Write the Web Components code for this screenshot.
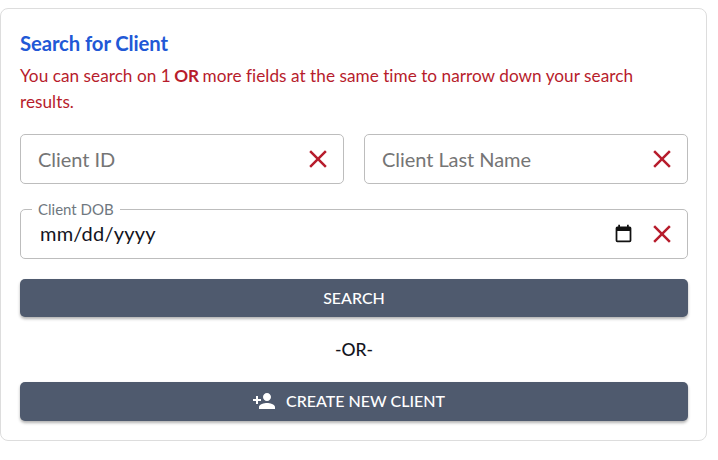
<!DOCTYPE html>
<html><head><meta charset="utf-8"><style>
html,body{margin:0;background:#fff;font-family:Lato,sans-serif}
body{padding:8px 11px 0 0}
</style></head><body>
<client-search></client-search>
<script>
const X=`<svg width="30" height="30" viewBox="0 0 24 24"><path fill="#b71c2c" d="M19 6.41 17.59 5 12 10.59 6.41 5 5 6.41 10.59 12 5 17.59 6.41 19 12 13.41 17.59 19 19 17.59 13.41 12z"/></svg>`;
class AppField extends HTMLElement{
  connectedCallback(){
    const s=this.attachShadow({mode:'open'});
    const legend=this.getAttribute('legend');
    const value=this.getAttribute('value');
    const ph=this.getAttribute('placeholder');
    s.innerHTML=`<style>
    :host{display:block;position:relative;height:50px;box-sizing:border-box;border:1px solid #bdbdbd;border-radius:5px;background:#fff}
    .row{display:flex;align-items:center;height:48px;padding:0 10.5px 0 17px;gap:11px}
    .t{flex:1;font-size:20px;white-space:nowrap}
    .ph{color:#757575;letter-spacing:-.05px}
    .val{color:#14141e;padding-left:2px;letter-spacing:.2px;margin-top:-2px}
    .lg{position:absolute;left:11px;top:-10px;padding:0 6px;background:#fff;font-size:15px;line-height:18px;color:#6f7880}
    svg{display:block;flex:none}
    </style>
    ${legend?`<span class="lg">${legend}</span>`:''}
    <div class="row">
    <span class="t ${value?'val':'ph'}">${value||ph}</span>
    <slot></slot>
    <span class="x">${X}</span>
    </div>`;
  }
}
customElements.define('app-field',AppField);
class AppButton extends HTMLElement{
  connectedCallback(){
    const s=this.attachShadow({mode:'open'});
    s.innerHTML=`<style>
    :host{display:flex;align-items:center;justify-content:center;gap:10px;height:39px;box-sizing:border-box;padding-bottom:2px;border-radius:5px;background:#4f5a6e;color:#fff;font-size:16px;font-weight:500;box-shadow:0 2px 3px rgba(0,0,0,.3)}
    </style><slot></slot>`;
  }
}
customElements.define('app-button',AppButton);
class ClientSearch extends HTMLElement{
  connectedCallback(){
    const s=this.attachShadow({mode:'open'});
    s.innerHTML=`<style>
    :host{display:block;box-sizing:border-box;height:433px;border:1px solid #ddd;border-radius:8px;padding:20px 18px 0 19px;background:#fff}
    h2{margin:0;font-size:20.3px;line-height:28px;color:#2158d6;font-weight:700;letter-spacing:-.1px}
    p{margin:6px 0 0;font-size:17.2px;line-height:26px;color:#b71c2c;max-width:640px;letter-spacing:.03px}
    b{font-weight:700;margin:0 -1px}
    .grid{display:grid;grid-template-columns:1fr 1fr;gap:20px;margin-top:19px}
    .dob{margin-top:25px}
    .search{margin-top:20px;height:38px}
    .or{text-align:center;font-size:17.5px;font-weight:500;line-height:24px;color:#14141e;margin:21px 0 20px}
    svg{display:block}
    .lbl{margin-right:11px}
    .cal{margin-top:-2px;margin-right:2px}
    </style>
    <h2>Search for Client</h2>
    <p>You can search on 1 <b>OR</b> more fields at the same time to narrow down your search<br>results.</p>
    <div class="grid">
      <app-field placeholder="Client ID"></app-field>
      <app-field placeholder="Client Last Name"></app-field>
    </div>
    <app-field class="dob" legend="Client DOB" value="mm/dd/yyyy">
      <svg class="cal" width="21" height="21" viewBox="0 0 24 24"><path fill="#111" d="M19 4h-1V2h-2v2H8V2H6v2H5a2 2 0 0 0-2 2v14a2 2 0 0 0 2 2h14a2 2 0 0 0 2-2V6a2 2 0 0 0-2-2zm0 16H5V9h14v11z"/></svg>
    </app-field>
    <app-button class="search">SEARCH</app-button>
    <div class="or">-OR-</div>
    <app-button>
      <svg width="24" height="24" viewBox="0 0 24 24"><path fill="#fff" d="M15 12c2.21 0 4-1.79 4-4s-1.79-4-4-4-4 1.79-4 4 1.79 4 4 4zm-9-2V7H4v3H1v2h3v3h2v-3h3v-2H6zm9 4c-2.67 0-8 1.34-8 4v2h16v-2c0-2.66-5.33-4-8-4z"/></svg>
      <span class="lbl">CREATE NEW CLIENT</span>
    </app-button>`;
  }
}
customElements.define('client-search',ClientSearch);
</script>
</body></html>
